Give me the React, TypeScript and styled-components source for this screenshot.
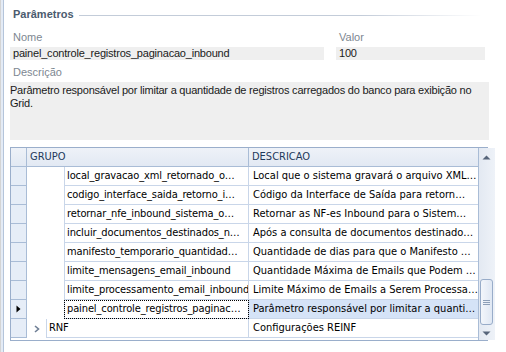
import React from 'react';
import styled, { createGlobalStyle } from 'styled-components';

const Global = createGlobalStyle`
  html, body { margin: 0; padding: 0; background: #ffffff; }
  body { width: 506px; height: 352px; overflow: hidden; }
`;

const Page = styled.div`
  display: flex;
  width: 506px;
  height: 352px;
  background: #ffffff;
  font-family: "Liberation Sans", Arial, sans-serif;
`;

const Splitter = styled.div`
  width: 4px;
  flex: none;
  box-sizing: border-box;
  border-left: 1px solid #d4d4d4;
  border-right: 1px solid #b4c4da;
  background: #e4ebf5;
`;

const Content = styled.div`
  flex: 1;
  display: flex;
  flex-direction: column;
  padding: 6px 0 0 6px;
`;

const GroupTitleRow = styled.div`
  display: flex;
  align-items: center;
  height: 16px;
  padding-left: 3px;
  margin-bottom: 1px;
`;

const GroupTitle = styled.span`
  font-weight: bold;
  font-size: 11px;
  color: #4b5b6e;
`;

const GroupLine = styled.div`
  flex: none;
  width: 403px;
  height: 1px;
  margin-left: 5px;
  margin-top: 2px;
  background: linear-gradient(to right, #c3ccd9 0%, #c3ccd9 70%, #ffffff 100%);
`;

const FieldsRow = styled.div`
  display: flex;
  gap: 12px;
  margin-top: 7px;
`;

const Field = styled.div<{ $w: number }>`
  display: flex;
  flex-direction: column;
  width: ${p => p.$w}px;
`;

const Label = styled.div`
  font-size: 11px;
  line-height: 14px;
  height: 14px;
  color: #7d8791;
  padding-left: 3px;
  margin-bottom: 3px;
`;

const ValueBox = styled.div<{ $pad?: number }>`
  height: 13px;
  line-height: 13px;
  background: #efefef;
  font-size: 11px;
  letter-spacing: -0.2px;
  color: #1a1a1a;
  padding-left: ${p => p.$pad ?? 3}px;
  white-space: nowrap;
  overflow: hidden;
`;

const DescBlock = styled.div`
  display: flex;
  flex-direction: column;
  margin-top: 5px;
  width: 479px;
`;

const DescBox = styled.div`
  height: 56px;
  padding-top: 2px;
  background: #efefef;
  font-size: 11px;
  letter-spacing: -0.22px;
  line-height: 13px;
  color: #1a1a1a;
  white-space: pre;
  overflow: hidden;
`;

const Grid = styled.div`
  display: flex;
  margin-top: 7px;
  width: 478px;
  height: 194px;
  box-sizing: border-box;
  border: 1px solid #9aaecb;
  font-family: "DejaVu Sans Condensed", "DejaVu Sans", sans-serif;
  font-size: 11px;
`;

const GridMain = styled.div`
  flex: 1;
  display: flex;
  flex-direction: column;
`;

const HeaderRow = styled.div`
  display: flex;
  height: 19px;
  box-sizing: border-box;
  border-bottom: 1px solid #a9bcd6;
  background: linear-gradient(to bottom, #eef2f8 0%, #e2e9f3 100%);
`;

const HeaderIndicator = styled.div`
  width: 16px;
  flex: none;
  box-sizing: border-box;
  border-right: 1px solid #a9bcd6;
`;

const HeaderCell = styled.div<{ $w?: number }>`
  ${p => (p.$w ? `width: ${p.$w}px; flex: none;` : 'flex: 1;')}
  box-sizing: border-box;
  border-right: 1px solid ${p => (p.$w ? '#a9bcd6' : 'transparent')};
  padding-left: 3px;
  line-height: 18px;
  color: #1e395b;
`;

const Row = styled.div`
  display: flex;
  height: 19px;
`;

const Indicator = styled.div`
  width: 16px;
  flex: none;
  box-sizing: border-box;
  border-right: 1px solid #a9bcd6;
  border-bottom: 1px solid #a9bcd6;
  background: #e6edf7;
  display: flex;
  align-items: center;
  justify-content: center;
`;

const Indent = styled.div<{ $w: number }>`
  width: ${p => p.$w}px;
  flex: none;
  display: flex;
  align-items: center;
  justify-content: center;
`;

const GroupCell = styled.div<{ $w: number; $focus?: boolean }>`
  width: ${p => p.$w}px;
  flex: none;
  box-sizing: border-box;
  border-left: 1px solid #c9d6e9;
  border-bottom: 1px solid #c9d6e9;
  border-right: 1px solid #c9d6e9;
  padding-left: 2px;
  letter-spacing: -0.12px;
  line-height: 18px;
  color: #000;
  white-space: nowrap;
  overflow: hidden;
  ${p => (p.$focus ? 'outline: 1px dotted #000; outline-offset: -1px;' : '')}
`;

const DescCell = styled.div<{ $sel?: boolean }>`
  flex: 1;
  box-sizing: border-box;
  border-bottom: 1px solid #c9d6e9;
  padding-left: 4px;
  line-height: 18px;
  color: #000;
  white-space: nowrap;
  overflow: hidden;
  background: ${p => (p.$sel ? '#d5e3f7' : '#ffffff')};
`;

const ScrollBar = styled.div`
  width: 17px;
  flex: none;
  display: flex;
  flex-direction: column;
  box-sizing: border-box;
  border-left: 1px solid #a9bcd6;
  background: linear-gradient(to right, #e3e9f2 0%, #eef2f8 100%);
`;

const ScrollButton = styled.div<{ $h: number }>`
  height: ${p => p.$h}px;
  display: flex;
  align-items: center;
  justify-content: center;
`;

const Track = styled.div`
  flex: 1;
  display: flex;
  flex-direction: column;
  justify-content: flex-end;
  align-items: center;
`;

const Thumb = styled.div`
  width: 13px;
  height: 46px;
  margin-bottom: 2px;
  box-sizing: border-box;
  border: 1px solid #98acc9;
  border-radius: 3px;
  background: linear-gradient(to right, #f3f6fb 0%, #dfe7f3 100%);
  display: flex;
  align-items: center;
  justify-content: center;
`;

const Arrow = ({ up }: { up?: boolean }) => (
  <svg width="9" height="5" viewBox="0 0 9 5">
    <path d={up ? 'M0.5 4.5 L4.5 0.5 L8.5 4.5 Z' : 'M0.5 0.5 L4.5 4.5 L8.5 0.5 Z'} fill="#56657a" />
  </svg>
);

const Grip = () => (
  <svg width="7" height="7" viewBox="0 0 7 7">
    <path d="M0 1.5 H7 M0 3.5 H7 M0 5.5 H7" stroke="#8d9fb8" strokeWidth="1" />
  </svg>
);

const RowMarker = () => (
  <svg width="5" height="8" viewBox="0 0 5 8">
    <path d="M0.5 0.5 L4.5 4 L0.5 7.5 Z" fill="#000" />
  </svg>
);

const Chevron = () => (
  <svg width="6" height="8" viewBox="0 0 6 8">
    <path d="M1 1 L4.5 4 L1 7" fill="none" stroke="#6f7f95" strokeWidth="1.6" />
  </svg>
);

type Item = { g: string; d: string; sel?: boolean };

const items: Item[] = [
  { g: 'local_gravacao_xml_retornado_o…', d: 'Local que o sistema gravará o arquivo XML…' },
  { g: 'codigo_interface_saida_retorno_i…', d: 'Código da Interface de Saída para retorn…' },
  { g: 'retornar_nfe_inbound_sistema_o…', d: 'Retornar as NF-es Inbound para o Sistem…' },
  { g: 'incluir_documentos_destinados_n…', d: 'Após a consulta de documentos destinado…' },
  { g: 'manifesto_temporario_quantidad…', d: 'Quantidade de dias para que o Manifesto …' },
  { g: 'limite_mensagens_email_inbound', d: 'Quantidade Máxima de Emails que Podem …' },
  { g: 'limite_processamento_email_inbound', d: 'Limite Máximo de Emails a Serem Processa…' },
  { g: 'painel_controle_registros_paginac…', d: 'Parâmetro responsável por limitar a quanti…', sel: true },
];

export default function App() {
  return (
    <>
      <Global />
      <Page>
        <Splitter />
        <Content>
          <GroupTitleRow>
            <GroupTitle>Parâmetros</GroupTitle>
            <GroupLine />
          </GroupTitleRow>
          <FieldsRow>
            <Field $w={314}>
              <Label>Nome</Label>
              <ValueBox>painel_controle_registros_paginacao_inbound</ValueBox>
            </Field>
            <Field $w={149}>
              <Label>Valor</Label>
              <ValueBox>100</ValueBox>
            </Field>
          </FieldsRow>
          <DescBlock>
            <Label>Descrição</Label>
            <DescBox>
              {'Parâmetro responsável por limitar a quantidade de registros carregados do banco para exibição no\nGrid.'}
            </DescBox>
          </DescBlock>
          <Grid>
            <GridMain>
              <HeaderRow>
                <HeaderIndicator />
                <HeaderCell $w={222}>GRUPO</HeaderCell>
                <HeaderCell>DESCRICAO</HeaderCell>
              </HeaderRow>
              {items.map(it => (
                <Row key={it.g}>
                  <Indicator>{it.sel ? <RowMarker /> : null}</Indicator>
                  <Indent $w={37} />
                  <GroupCell $w={185} $focus={it.sel}>{it.g}</GroupCell>
                  <DescCell $sel={it.sel}>{it.d}</DescCell>
                </Row>
              ))}
              <Row>
                <Indicator />
                <Indent $w={19}><Chevron /></Indent>
                <GroupCell $w={203}>RNF</GroupCell>
                <DescCell>Configurações REINF</DescCell>
              </Row>
            </GridMain>
            <ScrollBar>
              <ScrollButton $h={19}><Arrow up /></ScrollButton>
              <Track>
                <Thumb><Grip /></Thumb>
              </Track>
              <ScrollButton $h={13}><Arrow /></ScrollButton>
            </ScrollBar>
          </Grid>
        </Content>
      </Page>
    </>
  );
}
